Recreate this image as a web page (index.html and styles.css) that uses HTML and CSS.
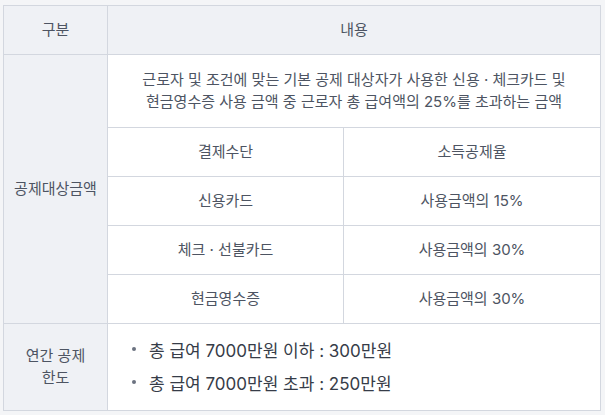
FILE: index.html
```html
<!DOCTYPE html>
<html lang="ko">
<head>
<meta charset="utf-8">
<title>신용카드 소득공제</title>
<link rel="stylesheet" href="styles.css">
</head>
<body>
<div class="page">
  <div class="table">
    <div class="cell head">구분</div>
    <div class="cell head span2">내용</div>

    <div class="cell side rows5">공제대상금액</div>
    <div class="cell desc span2">근로자 및 조건에 맞는 기본 공제 대상자가 사용한 신용 · 체크카드 및<br>현금영수증 사용 금액 중 근로자 총 급여액의 25%를 초과하는 금액</div>

    <div class="cell">결제수단</div>
    <div class="cell">소득공제율</div>
    <div class="cell">신용카드</div>
    <div class="cell">사용금액의 15%</div>
    <div class="cell">체크 · 선불카드</div>
    <div class="cell">사용금액의 30%</div>
    <div class="cell">현금영수증</div>
    <div class="cell">사용금액의 30%</div>

    <div class="cell side">연간 공제<br>한도</div>
    <div class="cell list span2">
      <ul class="bullets">
        <li>총 급여 7000만원 이하 : 300만원</li>
        <li>총 급여 7000만원 초과 : 250만원</li>
      </ul>
    </div>
  </div>
</div>
</body>
</html>
```

FILE: styles.css
```css
* { box-sizing: border-box; }
html, body { margin: 0; padding: 0; }
body {
  background: #f4f5f7;
  font-family: Inter, "Noto Sans CJK KR", sans-serif;
  color: #4d5462;
  font-size: 15px;
}
.page {
  padding: 5px 4px 0 3px;
}
.table {
  display: grid;
  grid-template-columns: 104px 236px 257px;
  grid-template-rows: 49px 73px 49px 49px 49px 49px 87px;
  border-left: 1px solid #d3d7df;
  border-top: 1px solid #d3d7df;
  background: #ffffff;
  width: 598px;
}
.cell {
  border-right: 1px solid #d3d7df;
  border-bottom: 1px solid #d3d7df;
  display: flex;
  align-items: center;
  justify-content: center;
  text-align: center;
  padding: 0 6px;
  line-height: 22px;
  word-break: keep-all;
  background: #ffffff;
}
.head, .side {
  background: #eff1f5;
}
.span2 { grid-column: span 2; }
.rows5 { grid-row: span 5; }
.desc { line-height: 22px; }
.list {
  justify-content: flex-start;
  text-align: left;
  padding-left: 24px;
}
.bullets {
  list-style: none;
  margin: 0;
  padding: 0;
  font-size: 17px;
  color: #363c48;
  line-height: 22px;
}
.bullets li {
  display: flex;
  align-items: center;
}
.bullets li + li { margin-top: 11px; }
.bullets li::before {
  content: "";
  width: 4px;
  height: 4px;
  border-radius: 50%;
  background: #6b7280;
  margin-right: 13px;
  flex: none;
  position: relative;
  top: -2px;
}
```
